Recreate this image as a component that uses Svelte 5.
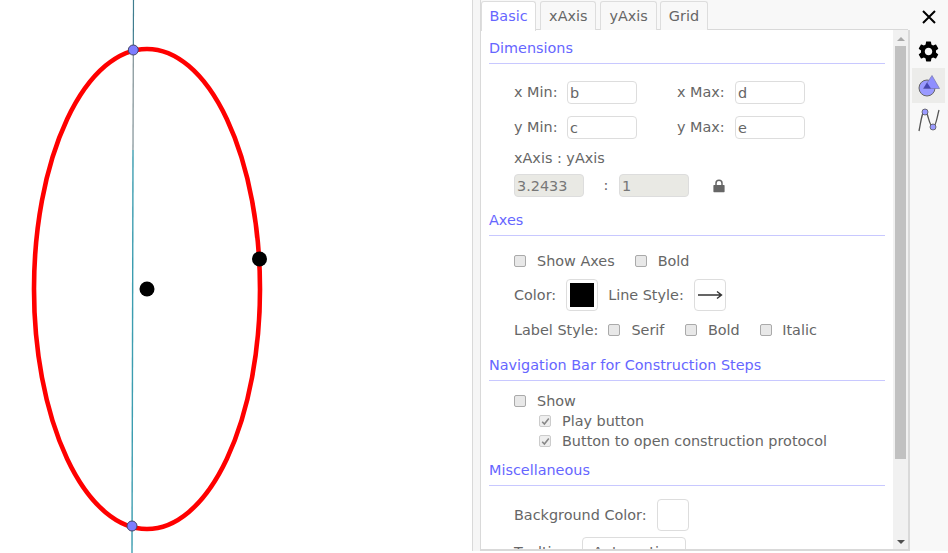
<script>
  const rows = [['x Min:', 'b', 'x Max:', 'd'], ['y Min:', 'c', 'y Max:', 'e']];
</script>

<div class="page">
  <svg class="canvas" width="472" height="553" viewBox="0 0 472 553">
    <line x1="133.5" y1="0" x2="133.3" y2="50" stroke="#3f7d8f" stroke-width="1.2" />
    <line x1="133.3" y1="50" x2="133" y2="150" stroke="#7d8f94" stroke-width="1.2" />
    <line x1="133" y1="150" x2="132" y2="553" stroke="#3c9db0" stroke-width="1.4" />
    <ellipse cx="147" cy="289" rx="113" ry="240" fill="none" stroke="#ff0000" stroke-width="4.6" />
    <circle cx="133.3" cy="50" r="5" fill="#7d7dff" stroke="#444466" stroke-width="1" />
    <circle cx="132" cy="526" r="5" fill="#7d7dff" stroke="#444466" stroke-width="1" />
    <circle cx="147" cy="289" r="7.5" fill="#000" />
    <circle cx="259.5" cy="259" r="7.5" fill="#000" />
  </svg>

  <div class="divider"></div>

  <section class="panel">
    <nav class="tabs">
      <button class="tab active">Basic</button>
      <button class="tab">xAxis</button>
      <button class="tab">yAxis</button>
      <button class="tab">Grid</button>
    </nav>
    <div class="body">
      <div class="content">
        <h3 class="dim-h">Dimensions</h3>
        <div class="dims">
          {#each rows as r}
            <div class="dim-row">
              <span class="lbl">{r[0]}</span><input class="field" value={r[1]} />
              <span class="lbl second">{r[2]}</span><input class="field" value={r[3]} />
            </div>
          {/each}
        </div>
        <div class="ratio-title">xAxis : yAxis</div>
        <div class="ratio">
          <input class="field off" value="3.2433" disabled />
          <span class="colon">:</span>
          <input class="field off" value="1" disabled />
          <svg class="lock" width="12" height="14" viewBox="0 0 12 14">
            <path d="M1 6h10a.6.6 0 0 1 .6.6v6a.6.6 0 0 1-.6.6H1a.6.6 0 0 1-.6-.6v-6A.6.6 0 0 1 1 6z" fill="#666" />
            <path d="M3 6.5V4.2a3 3 0 0 1 6 0v2.3" fill="none" stroke="#666" stroke-width="1.5" />
          </svg>
        </div>

        <h3 class="axes">Axes</h3>
        <div class="line show-axes">
          <span class="check"></span><span class="t1">Show Axes</span>
          <span class="check bold"></span><span class="t2">Bold</span>
        </div>
        <div class="line color-row">
          <span>Color:</span>
          <span class="swatch-btn"><span class="swatch"></span></span>
          <span class="ls">Line Style:</span>
          <span class="swatch-btn">
            <svg width="26" height="10" viewBox="0 0 26 10">
              <path d="M1 5h23M20 1.5 24.5 5 20 8.5" fill="none" stroke="#333" stroke-width="1.4" />
            </svg>
          </span>
        </div>
        <div class="line label-style">
          <span class="ll">Label Style:</span>
          <span class="check"></span><span class="t3">Serif</span>
          <span class="check"></span><span class="t3">Bold</span>
          <span class="check"></span><span class="t4">Italic</span>
        </div>

        <h3 class="nav-h">Navigation Bar for Construction Steps</h3>
        <div class="line thin first">
          <span class="check"></span><span class="t1">Show</span>
        </div>
        <div class="line thin sub">
          <span class="check done"><svg width="9" height="9" viewBox="0 0 9 9"><path d="M1.2 4.8 3.4 7 7.8 1.6" fill="none" stroke="#888" stroke-width="1.6" /></svg></span>
          <span class="t1">Play button</span>
        </div>
        <div class="line thin sub">
          <span class="check done"><svg width="9" height="9" viewBox="0 0 9 9"><path d="M1.2 4.8 3.4 7 7.8 1.6" fill="none" stroke="#888" stroke-width="1.6" /></svg></span>
          <span class="t1">Button to open construction protocol</span>
        </div>

        <h3 class="misc">Miscellaneous</h3>
        <div class="line bg-row">
          <span>Background Color:</span>
          <span class="swatch-btn"></span>
        </div>
        <div class="line tip-row">
          <span>Tooltips:</span>
          <span class="select">Automatic<i></i></span>
        </div>
      </div>
      <div class="scrollbar">
        <i class="up"></i>
        <div class="thumb"></div>
        <i class="down"></i>
      </div>
    </div>
  </section>

  <aside class="rail">
    <button class="tool close" aria-label="Close">
      <svg width="14" height="14" viewBox="0 0 14 14"><path d="M1 1l12 12M13 1 1 13" stroke="#000" stroke-width="2" /></svg>
    </button>
    <button class="tool gear" aria-label="Global">
      <svg width="25" height="25" viewBox="0 0 24 24"><path d="M19.14 12.94c.04-.3.06-.61.06-.94 0-.32-.02-.64-.07-.94l2.03-1.58a.49.49 0 0 0 .12-.61l-1.92-3.32a.488.488 0 0 0-.59-.22l-2.39.96c-.5-.38-1.03-.7-1.62-.94l-.36-2.54a.484.484 0 0 0-.48-.41h-3.84c-.24 0-.43.17-.47.41l-.36 2.54c-.59.24-1.13.57-1.62.94l-2.39-.96c-.22-.08-.47 0-.59.22L2.74 8.87c-.12.21-.08.47.12.61l2.03 1.58c-.05.3-.09.63-.09.94s.02.64.07.94l-2.03 1.58a.49.49 0 0 0-.12.61l1.92 3.32c.12.22.37.29.59.22l2.39-.96c.5.38 1.03.7 1.62.94l.36 2.54c.05.24.24.41.48.41h3.84c.24 0 .44-.17.47-.41l.36-2.54c.59-.24 1.13-.56 1.62-.94l2.39.96c.22.08.47 0 .59-.22l1.92-3.32c.12-.22.07-.47-.12-.61l-2.01-1.58zM12 15.6c-1.98 0-3.6-1.62-3.6-3.6s1.62-3.6 3.6-3.6 3.6 1.62 3.6 3.6-1.62 3.6-3.6 3.6z" fill="#000" /></svg>
    </button>
    <button class="tool shapes" aria-label="Objects">
      <svg width="26" height="26" viewBox="0 0 26 26">
        <circle cx="11" cy="15" r="8" fill="#9a9aff" stroke="#666" stroke-width="1" />
        <path d="M16 2.5 23.5 15.5H7.5z" fill="#8f8fff" stroke="#7777aa" stroke-width=".7" />
        <path d="M11 9.5 15 15.5H7.5z" fill="#4646b0" />
      </svg>
    </button>
    <button class="tool curve" aria-label="Functions">
      <svg width="24" height="26" viewBox="0 0 24 26">
        <path d="M2 24C4 14 5 4 8 4c3 0 4 16 8 16 3 0 4-10 6-17" fill="none" stroke="#555" stroke-width="1.3" />
        <circle cx="8" cy="5" r="3" fill="#9a9aff" stroke="#555" stroke-width=".8" />
        <circle cx="16" cy="20" r="3" fill="#9a9aff" stroke="#555" stroke-width=".8" />
      </svg>
    </button>
  </aside>
</div>

<style>
  :global(body) { margin: 0; background: #fff; }
  .page {
    display: flex; width: 948px; height: 553px; overflow: hidden;
    font: 14.4px/17px "DejaVu Sans", sans-serif; color: #666;
  }
  .canvas { display: block; flex: none; }
  .divider { flex: none; width: 8px; height: 551px; box-sizing: border-box; background: #f6f6f6; border-left: 1px solid #d9d9d9; }
  .panel { flex: none; width: 430px; height: 551px; box-sizing: border-box; background: #f8f8f8; border-left: 1px solid #d9d9d9; display: flex; flex-direction: column; }
  .tabs { display: flex; gap: 4px; height: 30px; padding-top: 1px; box-sizing: border-box; border-bottom: 1px solid #d9d9d9; margin-right: 2px; }
  .tab { font: inherit; color: #666; background: #f8f8f8; border: 1px solid #ddd; border-bottom: none; border-radius: 3px 3px 0 0; padding: 0 8px; height: 29px; }
  .tab.active { background: #fff; color: #6666ff; height: 30px; padding: 0 7.5px; position: relative; z-index: 1; border-color: #ddd; }
  .tab:nth-child(3) { margin-right: -1px; }
  .body { flex: 1; display: flex; min-height: 0; background: #fff; border: solid #d9d9d9; border-width: 0 2px 2px 0; }
  .content { flex: 1; overflow: hidden; padding: 0 8px; min-width: 0; }
  h3 { font: inherit; color: #6666ff; margin: 0; padding-top: 9px; line-height: 17px; border-bottom: 1px solid #c8c8ff; box-sizing: border-box; height: 33px; }
  h3.dim-h { height: 34px; padding-top: 10px; }
  .dims { padding: 17px 0 0 25px; }
  .dim-row { display: flex; align-items: center; height: 23px; margin-bottom: 12px; }
  .dim-row:last-child { margin-bottom: 11px; }
  .lbl { width: 53px; }
  .lbl.second { width: 58px; margin-left: 40px; }
  .field { width: 70px; height: 23px; box-sizing: border-box; border: 1px solid #ddd; border-radius: 4px; padding: 0 2px; font: inherit; color: #666; background: #fff; outline: none; }
  .field.off { background: #e9e9e4; color: #777; }
  .ratio-title { margin-left: 25px; height: 17px; }
  .ratio { display: flex; align-items: center; height: 23px; margin: 7px 0 0 25px; }
  .colon { width: 35px; box-sizing: border-box; padding-left: 9px; text-align: center; }
  .lock { margin-left: 24px; }
  h3.axes { margin-top: 6px; }
  .line { display: flex; align-items: center; padding-left: 25px; }
  .check { flex: none; display: inline-flex; align-items: center; justify-content: center; width: 12px; height: 12px; box-sizing: border-box; border: 1px solid #aaa; border-radius: 2px; background: #e8e8e8; }
  .check.done { background: #eee; border-color: #ccc; }
  .t1 { margin-left: 11px; }
  .check.bold { margin-left: 20px; }
  .t2 { margin-left: 11px; }
  .show-axes { height: 18px; margin-top: 16px; }
  .color-row { height: 32px; margin-top: 9px; }
  .swatch-btn { flex: none; display: inline-flex; align-items: center; justify-content: center; width: 32px; height: 32px; box-sizing: border-box; border: 1px solid #ddd; border-radius: 4px; background: #fff; }
  .swatch { width: 24px; height: 24px; background: #000; }
  .color-row > .swatch-btn:nth-of-type(2) { margin-left: 10px; }
  .ls { margin: 0 10px; }
  .label-style { height: 18px; margin-top: 10px; }
  .ll { margin-right: 10px; }
  .t3 { margin: 0 20.5px 0 11px; }
  .t4 { margin-left: 10px; }
  h3.nav-h { margin-top: 9px; }
  .thin { height: 20px; }
  .first { margin-top: 10px; }
  .sub { padding-left: 50px; }
  h3.misc { margin-top: 2px; }
  .bg-row { height: 32px; margin-top: 13px; }
  .bg-row .swatch-btn { margin-left: 10px; }
  .tip-row { height: 30px; margin-top: 6px; }
  .select { display: inline-flex; align-items: center; justify-content: space-between; width: 104px; height: 30px; box-sizing: border-box; margin-left: 9px; padding: 0 5px 0 10px; border: 1px solid #ddd; border-radius: 4px; background: #fff; }
  .select i { width: 0; height: 0; border: 3.5px solid transparent; border-top: 4px solid #444; border-bottom: none; }
  .scrollbar { flex: none; width: 15px; background: #f1f1f1; position: relative; }
  .thumb { position: absolute; left: 2px; top: 16px; width: 11px; height: 413px; background: #c1c1c1; }
  .up, .down { position: absolute; left: 3.5px; width: 0; height: 0; border: 4px solid transparent; }
  .up { top: 7px; border-bottom: 4px solid #a8a8a8; border-top: none; }
  .down { bottom: 5px; border-top: 4px solid #505050; border-bottom: none; }
  .rail { flex: none; width: 38px; height: 551px; background: #f8f8f8; display: flex; flex-direction: column; align-items: flex-end; padding-right: 3px; box-sizing: border-box; }
  .tool { display: flex; align-items: center; justify-content: center; width: 33px; padding: 0; border: 0; background: none; }
  .close { height: 34px; }
  .gear { height: 34px; }
  .shapes { height: 35px; background: #ececea; }
  .curve { height: 33px; }
</style>
